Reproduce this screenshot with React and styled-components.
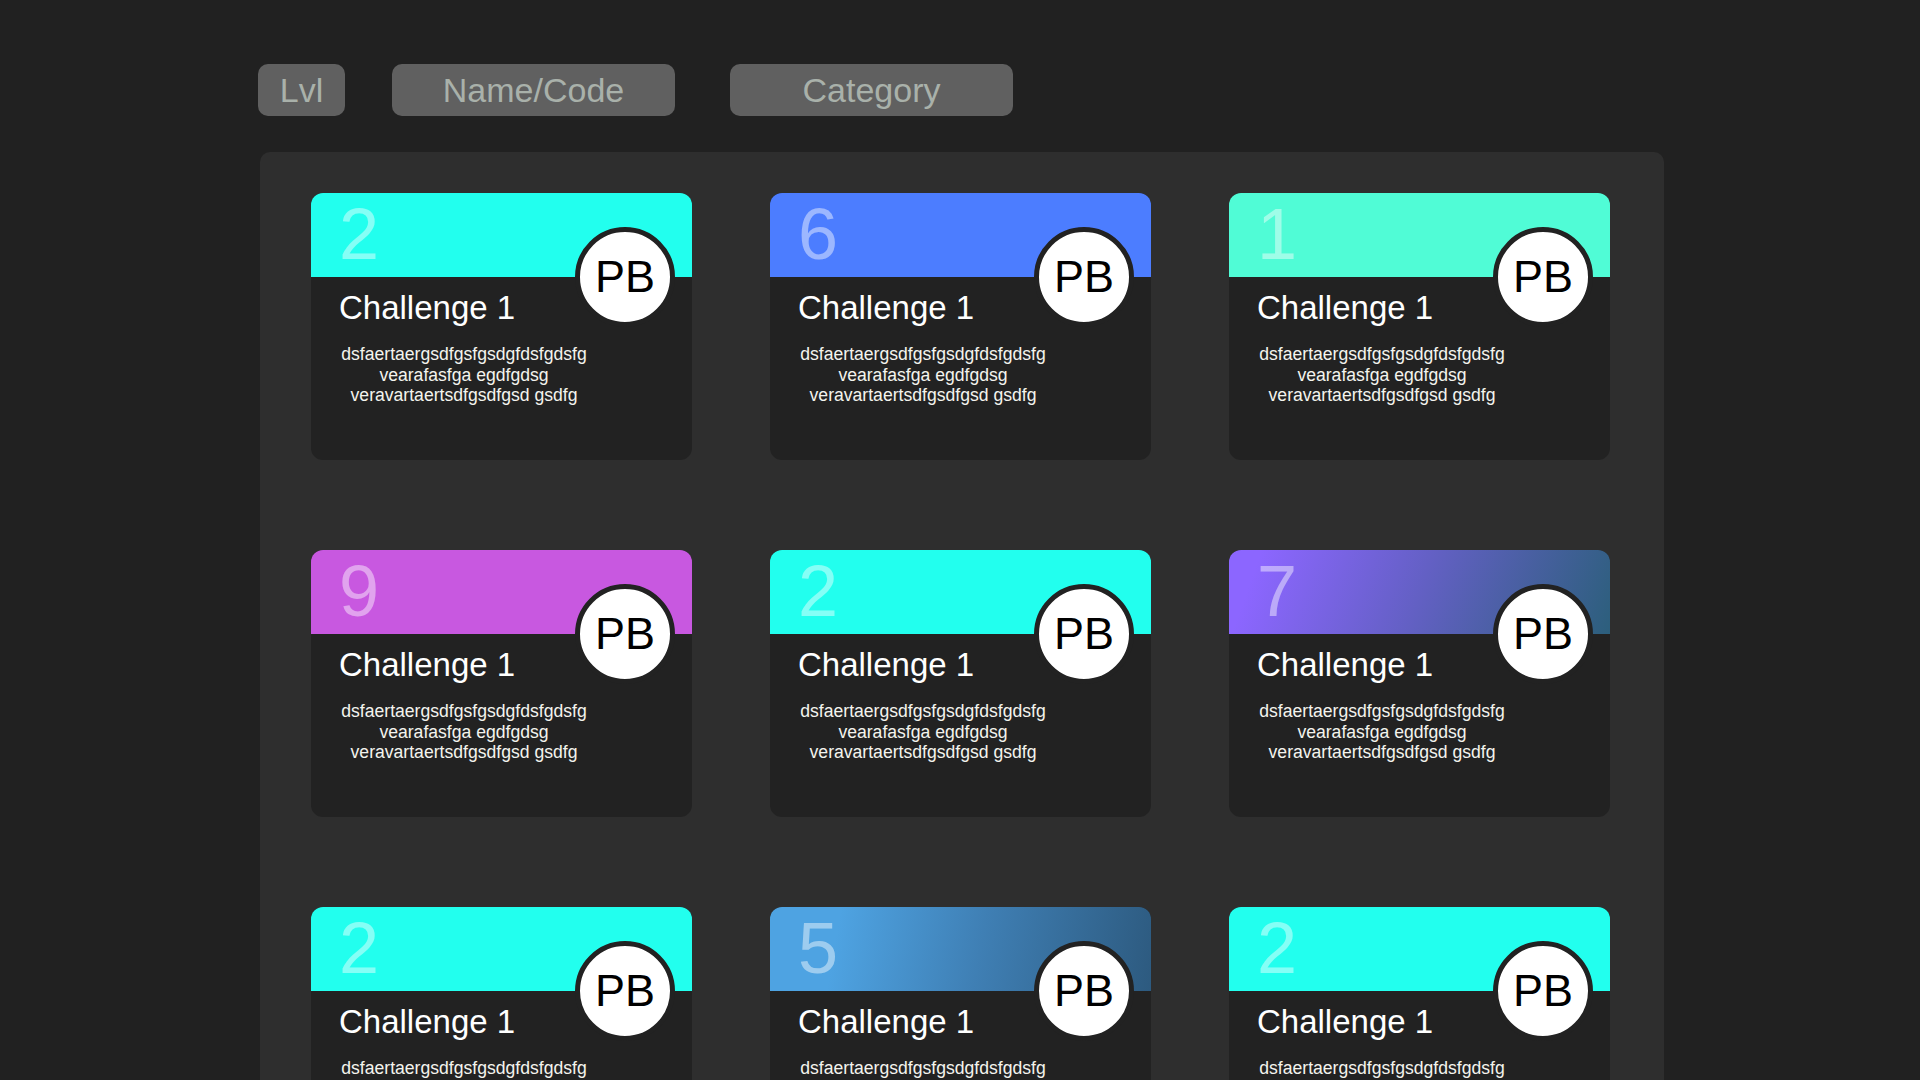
import React from 'react'
import styled, { createGlobalStyle } from 'styled-components'

const GlobalStyle = createGlobalStyle`
  html, body {
    margin: 0;
    padding: 0;
    background-color: #212121;
    font-family: 'Liberation Sans', Arial, sans-serif;
  }
`

const Page = styled.div`
  width: 1404px;
  margin-left: 260px;
  padding-top: 64px;
  padding-bottom: 40px;
`

const Toolbar = styled.div`
  display: flex;
  align-items: center;
  margin-left: -2px;
  margin-bottom: 36px;
`

const FilterButton = styled.div`
  display: flex;
  align-items: center;
  justify-content: center;
  box-sizing: border-box;
  width: ${({ $width }) => $width}px;
  height: 52px;
  margin-right: ${({ $gap }) => $gap || 0}px;
  border-radius: 10px;
  background-color: #606060;
  color: #a9b1aa;
  font-size: 34px;
  user-select: none;
`

const Panel = styled.div`
  box-sizing: border-box;
  background-color: #2e2e2e;
  border-radius: 10px;
  padding: 41px 53px 41px 51px;
`

const Grid = styled.div`
  display: grid;
  grid-template-columns: repeat(3, 381px);
  column-gap: 78px;
  row-gap: 90px;
`

const Card = styled.div`
  position: relative;
  height: 267px;
  border-radius: 12px;
  background-color: #222222;
  overflow: hidden;
`

const Header = styled.div`
  box-sizing: border-box;
  height: 84px;
  padding: 5px 28px 0;
  background: ${({ $bg }) => $bg};
`

const Level = styled.div`
  font-size: 72px;
  line-height: 1;
  color: rgba(255, 255, 255, 0.45);
`

const Badge = styled.div`
  position: absolute;
  top: 34px;
  right: 17px;
  width: 90px;
  height: 90px;
  border: 5px solid #222222;
  border-radius: 50%;
  background-color: #ffffff;
  color: #000000;
  font-size: 45px;
  display: flex;
  align-items: center;
  justify-content: center;
`

const Body = styled.div`
  padding: 12px 28px 0;
`

const Title = styled.div`
  font-size: 33px;
  color: #ffffff;
`

const Desc = styled.p`
  width: 250px;
  margin: 17px 0 0;
  font-size: 17.6px;
  line-height: 20.5px;
  text-align: center;
  color: #f4f4ee;
`

const headers = {
  cyan: '#22ffee',
  blue: '#4c7dff',
  mint: '#50fcd6',
  magenta: '#c858e0',
  violet: 'linear-gradient(110deg, #8c66ff 8%, #6360c4 50%, #2c5f7c 100%)',
  sky: 'linear-gradient(100deg, #4ea3e2 18%, #3f7fb4 55%, #2d5a7f 100%)'
}

const challenges = [
  { lvl: 2, color: 'cyan' },
  { lvl: 6, color: 'blue' },
  { lvl: 1, color: 'mint' },
  { lvl: 9, color: 'magenta' },
  { lvl: 2, color: 'cyan' },
  { lvl: 7, color: 'violet' },
  { lvl: 2, color: 'cyan' },
  { lvl: 5, color: 'sky' },
  { lvl: 2, color: 'cyan' }
]

const ChallengeCard = ({ lvl, color }) => (
  <Card>
    <Header $bg={headers[color]}>
      <Level>{lvl}</Level>
    </Header>
    <Badge>PB</Badge>
    <Body>
      <Title>Challenge 1</Title>
      <Desc>dsfaertaergsdfgsfgsdgfdsfgdsfg vearafasfga egdfgdsg veravartaertsdfgsdfgsd gsdfg</Desc>
    </Body>
  </Card>
)

const App = () => {
  return (
    <>
      <GlobalStyle />
      <Page>
        <Toolbar>
          <FilterButton $width={87} $gap={47}>Lvl</FilterButton>
          <FilterButton $width={283} $gap={55}>Name/Code</FilterButton>
          <FilterButton $width={283}>Category</FilterButton>
        </Toolbar>
        <Panel>
          <Grid>
            {challenges.map((c, index) => (
              <ChallengeCard key={index} lvl={c.lvl} color={c.color} />
            ))}
          </Grid>
        </Panel>
      </Page>
    </>
  )
}

export default App
